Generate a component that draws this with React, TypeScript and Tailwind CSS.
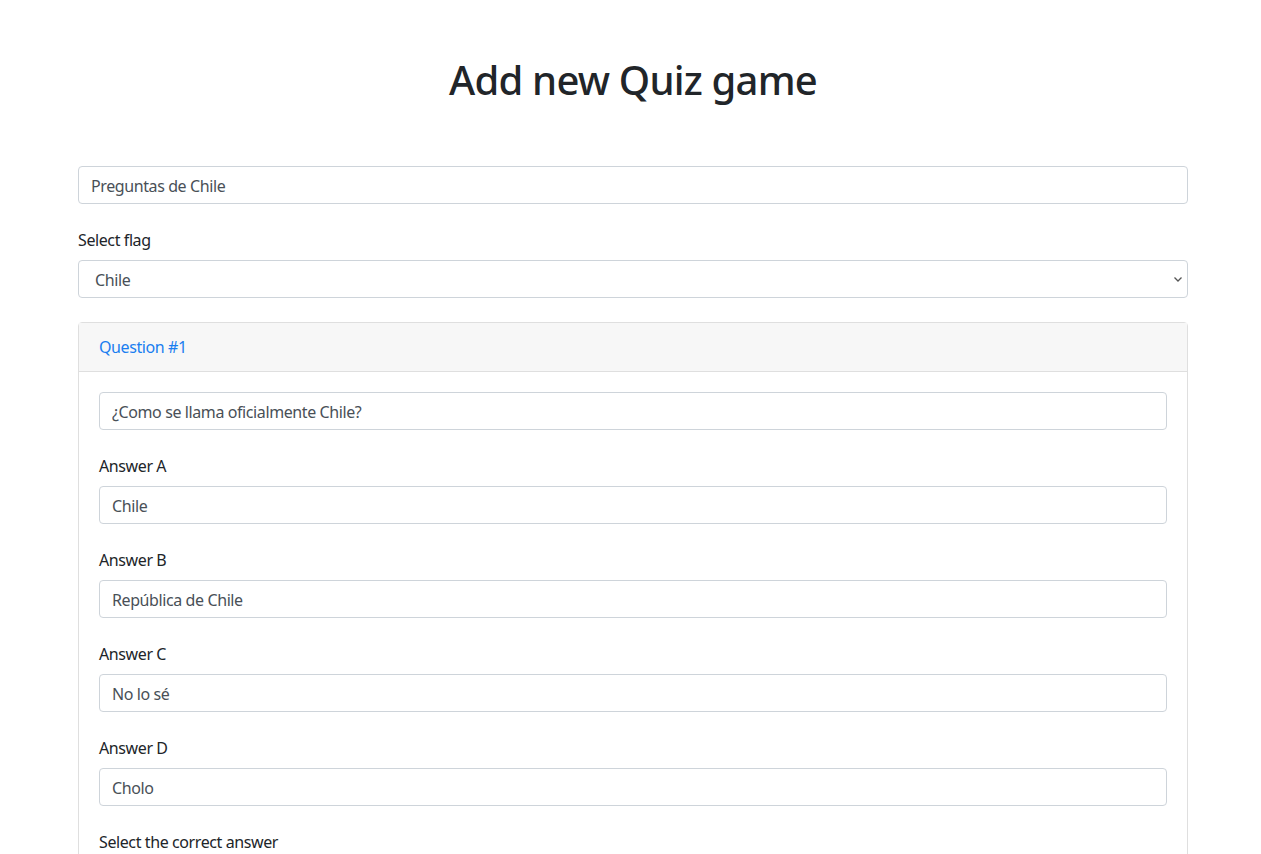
import React from 'react';

const inputCls =
  'block w-full h-[38px] px-3 pt-[1px] text-base tracking-[-0.4px] text-[#495057] bg-white border border-[#ced4da] rounded-[4px] outline-none';

type FieldProps = {
  label: string;
  value: string;
};

const Field: React.FC<FieldProps> = ({ label, value }) => (
  <div className="mt-6">
    <label className="block leading-6 mb-2 text-[#212529]">{label}</label>
    <input className={inputCls} defaultValue={value} />
  </div>
);

export default function App() {
  return (
    <div className="min-h-screen bg-white font-['Segoe_UI','Noto_Sans',sans-serif] tracking-[-0.4px] text-[#212529]">
      <div className="w-[1110px] ml-[78px] pt-[56px]">
        <h1 className="text-center text-[40px] leading-[48px] font-medium tracking-[-0.8px] mb-[62px]">
          Add new Quiz game
        </h1>

        <input className={inputCls} defaultValue="Preguntas de Chile" />

        <div className="mt-6">
          <label className="block leading-6 mb-2">Select flag</label>
          <div className="relative">
            <select className={inputCls + ' appearance-none pl-4'} defaultValue="cl">
              <option value="cl">Chile</option>
              <option value="ar">Argentina</option>
              <option value="pe">Perú</option>
            </select>
            <svg
              className="absolute right-[5px] top-[14px] pointer-events-none"
              width="10"
              height="10"
              viewBox="0 0 10 10"
              fill="none"
              stroke="#555"
              strokeWidth="1.3"
            >
              <path d="M1.5 3.5 L5 7 L8.5 3.5" />
            </svg>
          </div>
        </div>

        <div className="mt-6 border border-[#dfdfdf] rounded-[4px]">
          <div className="bg-[#f7f7f7] border-b border-[#dfdfdf] px-5 py-3 leading-6 text-[#1a7ef0]">
            Question #1
          </div>
          <div className="p-5">
            <input className={inputCls} defaultValue="¿Como se llama oficialmente Chile?" />
            <Field label="Answer A" value="Chile" />
            <Field label="Answer B" value="República de Chile" />
            <Field label="Answer C" value="No lo sé" />
            <Field label="Answer D" value="Cholo" />
            <div className="mt-6">
              <label className="block leading-6 mb-2">Select the correct answer</label>
              <select className={inputCls} defaultValue="a">
                <option value="a">Answer A</option>
                <option value="b">Answer B</option>
                <option value="c">Answer C</option>
                <option value="d">Answer D</option>
              </select>
            </div>
          </div>
        </div>
      </div>
    </div>
  );
}
